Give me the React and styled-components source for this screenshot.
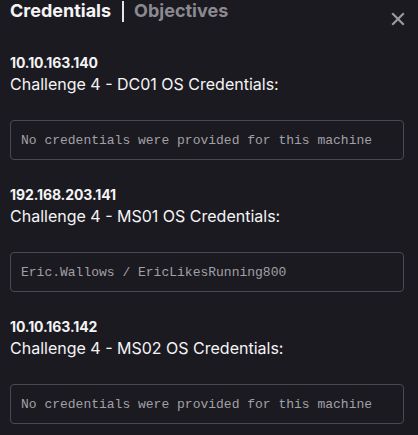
import React from 'react';
import styled, { createGlobalStyle } from 'styled-components';

const GlobalStyle = createGlobalStyle`
    html, body {
        margin: 0;
        padding: 0;
        background: #1c1a21;
    }
    body {
        font-family: Inter, 'Noto Sans', sans-serif;
        color: #f4f4f5;
    }
`

const Panel = styled.div`
    width: 418px;
    height: 435px;
    overflow: hidden;
    background: #1c1a21;
    padding: 0 14px 0 10px;
    box-sizing: border-box;
`

const Header = styled.div`
    display: flex;
    align-items: flex-start;
    justify-content: space-between;
    height: 52px;
`

const Tabs = styled.div`
    display: flex;
    align-items: center;
    height: 22px;
`

const Tab = styled.span`
    font-size: 18px;
    font-weight: 700;
    line-height: 22px;
    color: ${props => props.active ? '#f4f4f5' : '#8b8a91'};
`

const Divider = styled.span`
    width: 2px;
    height: 21px;
    background: #e4e4e7;
    margin: 0 10px 0 11px;
`

const Close = styled.button`
    background: none;
    border: none;
    padding: 0;
    margin-top: 12px;
    margin-right: -1px;
    width: 14px;
    height: 14px;
    cursor: pointer;
    display: flex;
`

const Section = styled.div`
    margin-bottom: 24px;
`

const Ip = styled.div`
    font-size: 14px;
    font-weight: 700;
    line-height: 21px;
    letter-spacing: -0.1px;
    color: #f4f4f5;
`

const Label = styled.div`
    font-size: 16px;
    line-height: 22px;
    color: #f4f4f5;
    margin-bottom: 25px;
`

const CredBox = styled.div`
    border: 1px solid #4b4951;
    border-radius: 4px;
    height: 38px;
    display: flex;
    align-items: center;
    padding: 0 10px;
    font-family: 'Liberation Mono', 'DejaVu Sans Mono', monospace;
    font-size: 13px;
    color: #a1a0a6;
`

const machines = [
    { ip: '10.10.163.140', name: 'DC01', creds: 'No credentials were provided for this machine' },
    { ip: '192.168.203.141', name: 'MS01', creds: 'Eric.Wallows / EricLikesRunning800' },
    { ip: '10.10.163.142', name: 'MS02', creds: 'No credentials were provided for this machine' },
]

export default function App() {
    return (
        <Panel>
            <GlobalStyle />
            <Header>
                <Tabs>
                    <Tab active>Credentials</Tab>
                    <Divider />
                    <Tab>Objectives</Tab>
                </Tabs>
                <Close aria-label="Close">
                    <svg width="14" height="14" viewBox="0 0 14 14">
                        <path d="M2 2 L12 12 M12 2 L2 12" stroke="#9a99a0" strokeWidth="2.2" strokeLinecap="square" />
                    </svg>
                </Close>
            </Header>
            {machines.map(m => (
                <Section key={m.ip}>
                    <Ip>{m.ip}</Ip>
                    <Label>Challenge 4 - {m.name} OS Credentials:</Label>
                    <CredBox>{m.creds}</CredBox>
                </Section>
            ))}
        </Panel>
    )
}
